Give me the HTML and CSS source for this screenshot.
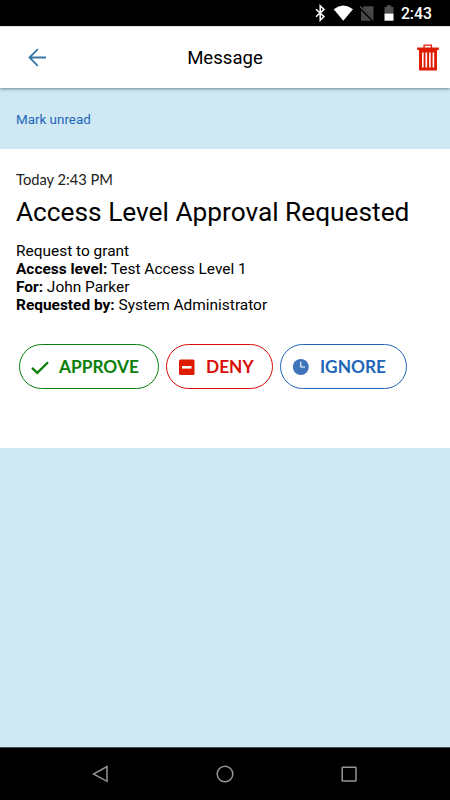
FILE: index.html
```
<!DOCTYPE html>
<html lang="en">
<head>
    <meta charset="UTF-8">
    <meta name="viewport" content="width=device-width, initial-scale=1.0">
    <link rel="stylesheet" href="styles.css">
    <title>Message</title>
</head>
<body>
    <div class="screen">
        <div class="status-bar">
            <svg class="status-icons" width="98" height="26" viewBox="0 0 98 26">
                <path d="M3 9.2l8 7.4-3.8 3.6V5.8L11 9.4l-8 7.4" fill="none" stroke="#fff" stroke-width="1.5"/>
                <path d="M20.7 9.2Q30.3 2 40 9.2L30.3 20.7z" fill="#fff"/>
                <path d="M51 6.3h9.5v14.4H48V9.5z" fill="#484848"/>
                <path d="M46.5 7l14 14" stroke="#000" stroke-width="2.6"/>
                <path d="M47 6.5l13.5 13.7" stroke="#555" stroke-width="1.1"/>
                <path d="M71.5 7h2.3V5.3h4.4V7h2.3v6.5h-9z" fill="#505050"/>
                <path d="M71.5 13.5h9v7.2h-9z" fill="#fff"/>
            </svg>
            <span class="clock">2:43</span>
        </div>

        <header class="header">
            <svg class="back" width="20" height="20" viewBox="0 0 20 20">
                <path d="M19 9.5H2.8M10.8 1.2L2.5 9.5l8.3 8.3" fill="none" stroke="#3777a7" stroke-width="1.8"/>
            </svg>
            <h1 class="title">Message</h1>
            <svg class="trash" width="24" height="28" viewBox="0 0 24 28">
                <path d="M8.1 4.5V1.2h7.3v3.3" fill="none" stroke="#df1c00" stroke-width="1.3"/>
                <path d="M1.2 3.5h21.6v2.4H1.2zM3 5.5h18v20.3q0 .7-.7.7H3.7q-.7 0-.7-.7z" fill="#df1c00"/>
                <path d="M6.8 8.5v15M10.3 8.5v15M13.9 8.5v15M17.4 8.5v15" stroke="#fff" stroke-width="1.6"/>
            </svg>
        </header>

        <div class="toolbar">
            <a class="mark-unread">Mark unread</a>
        </div>

        <main class="message">
            <div class="date">Today 2:43 PM</div>
            <h2 class="subject">Access Level Approval Requested</h2>
            <div class="details">
                <div>Request to grant</div>
                <div><b>Access level:</b> Test Access Level 1</div>
                <div><b>For:</b> John Parker</div>
                <div><b>Requested by:</b> System Administrator</div>
            </div>
            <div class="actions">
                <button class="btn approve">
                    <svg width="20" height="20" viewBox="0 0 20 20">
                        <path d="M2 10.8l5.3 5.1L18 5.2" fill="none" stroke="#0a800a" stroke-width="2.3"/>
                    </svg>
                    <span>APPROVE</span>
                </button>
                <button class="btn deny">
                    <svg width="20" height="20" viewBox="0 0 20 20">
                        <rect x="2" y="2.5" width="15.5" height="15.5" rx="1.5" fill="#df1c00"/>
                        <path d="M5 10.3h9.5" stroke="#fff" stroke-width="2.6"/>
                    </svg>
                    <span>DENY</span>
                </button>
                <button class="btn ignore">
                    <svg width="20" height="20" viewBox="0 0 20 20">
                        <circle cx="9.8" cy="10" r="8" fill="#3f74bd"/>
                        <path d="M9.8 4.8V10h4.2" fill="none" stroke="#fff" stroke-width="1.1"/>
                    </svg>
                    <span>IGNORE</span>
                </button>
            </div>
        </main>

        <nav class="nav-bar">
            <svg width="18" height="18" viewBox="0 0 18 18">
                <path d="M15 1.5v14.8L1.5 9z"/>
            </svg>
            <svg width="18" height="18" viewBox="0 0 18 18">
                <circle cx="9" cy="9" r="7.8"/>
            </svg>
            <svg width="18" height="18" viewBox="0 0 18 18">
                <rect x="2.2" y="2.2" width="13.8" height="13.8" rx="0.5"/>
            </svg>
        </nav>
    </div>
</body>
</html>
```
FILE: styles.css
```
body {
    margin: 0;
    font-family: Roboto, sans-serif;
    color: #000;
    background-color: #cfe8f3;
}

.screen {
    display: flex;
    flex-direction: column;
    height: 800px;
    width: 450px;
    overflow: hidden;
}

.screen svg {
    display: block;
    flex-shrink: 0;
}

.status-bar {
    display: flex;
    justify-content: flex-end;
    align-items: center;
    height: 26px;
    box-sizing: border-box;
    padding-right: 18px;
    background-color: #000;
    color: #fff;
}

.status-icons {
    margin-right: -10px;
}

.clock {
    font-size: 15.8px;
    font-weight: 500;
    line-height: 26px;
    padding-top: 2px;
}

.header {
    display: flex;
    align-items: center;
    height: 62px;
    box-sizing: border-box;
    padding: 1px 10px 0 27px;
    background-color: #fff;
    border-top: 1px solid #e4e4e4;
    box-shadow: 0 1px 3px rgba(0, 40, 50, 0.5);
    z-index: 1;
}

.title {
    flex: 1;
    margin: 0;
    padding-right: 13px;
    font-size: 18.6px;
    font-weight: 400;
    text-align: center;
}

.toolbar {
    display: flex;
    align-items: center;
    height: 61px;
    padding-left: 16px;
}

.mark-unread {
    padding-top: 1px;
    font-size: 13.4px;
    color: #2066bb;
}

.message {
    height: 299px;
    box-sizing: border-box;
    padding: 21px 16px 0;
    background-color: #fff;
}

.date {
    font-family: Lato, sans-serif;
    font-size: 14.7px;
    font-weight: 400;
    line-height: 18px;
    color: #222;
}

.subject {
    margin: 8px 0 14px;
    font-size: 26.25px;
    font-weight: 400;
    line-height: 32px;
    white-space: nowrap;
}

.details {
    font-size: 15.45px;
    line-height: 18px;
}

.actions {
    display: flex;
    gap: 7px;
    margin-top: 30px;
    padding-left: 3px;
}

/* pill buttons */
.btn {
    display: flex;
    align-items: center;
    gap: 9px;
    height: 45px;
    box-sizing: border-box;
    padding: 0 0 0 10px;
    border: 1px solid;
    border-radius: 23px;
    background-color: #fff;
    font-family: Lato, sans-serif;
    font-size: 17.3px;
    font-weight: 700;
    white-space: nowrap;
}

.approve {
    width: 140px;
    color: #0a800a;
}

.deny {
    width: 107px;
    color: #d90d08;
}

.ignore {
    width: 127px;
    color: #2066b8;
}

.nav-bar {
    display: flex;
    justify-content: space-between;
    align-items: center;
    height: 53px;
    box-sizing: border-box;
    margin-top: auto;
    padding: 0 92px;
    background-color: #000;
    border-top: 1px solid #405055;
}

.nav-bar svg {
    fill: none;
    stroke: #949494;
    stroke-width: 1.5;
}
```
